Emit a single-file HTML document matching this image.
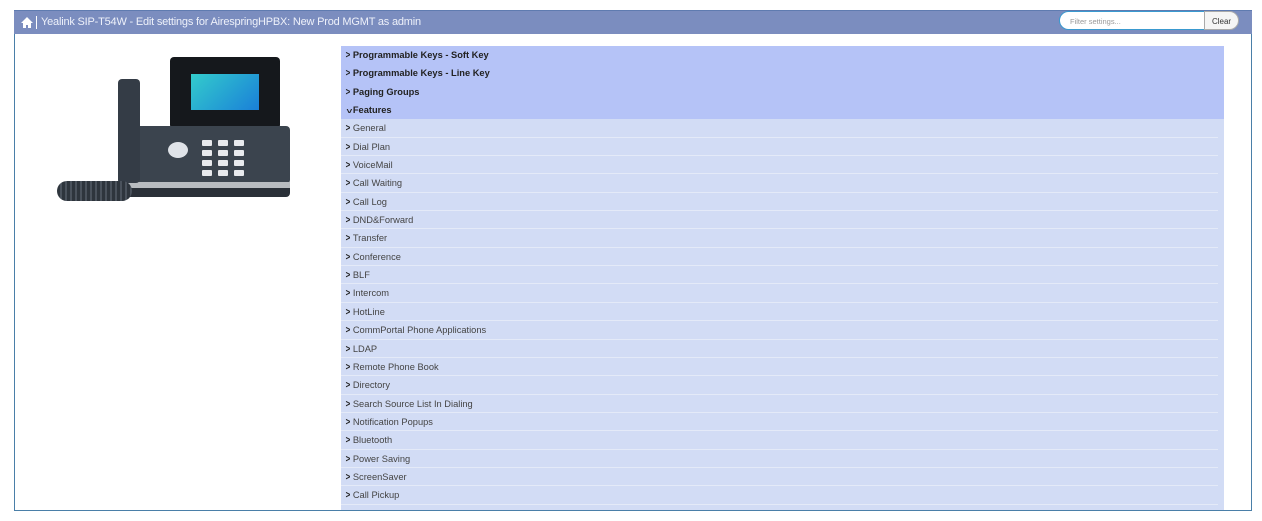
<!DOCTYPE html>
<html><head><meta charset="utf-8"><style>
*{margin:0;padding:0;box-sizing:border-box}
body{width:1262px;height:521px;background:#fff;font-family:"Liberation Sans",Arial,sans-serif;position:relative;overflow:hidden}
#frame{position:absolute;left:14px;top:10px;width:1238px;height:501px;border:1px solid #4a7fa8;border-top:none}
#hdr{position:absolute;left:14px;top:10px;width:1238px;height:24px;background:#7b8dbf;border-top:1px solid #5f7bb0;color:#eef1fa;font-size:11px}
#hdr .t{position:absolute;left:27px;top:5px;letter-spacing:-0.2px}
#filter{position:absolute;left:1059px;top:11px;width:146px;height:19px;border:1px solid #3a9ad0;border-radius:10px 0 0 10px;background:#fff;font-size:7.5px;color:#999;padding:5px 0 0 10px}
#clear{position:absolute;left:1204px;top:11px;width:35px;height:19px;border:1px solid #aaa;border-radius:0 10px 10px 0;background:#f5f5f5;font-size:8px;color:#333;text-align:center;padding-top:5px}
#panel{position:absolute;left:341px;top:46px;width:883px;height:470px;background:#d2dcf5}
.r{height:18.35px;font-size:9.3px;color:#444;padding-left:4px;line-height:18px;position:relative}
.top{background:#b5c3f7;font-weight:bold;color:#222}
.sub{border-bottom:1px solid #e4eaf8;margin-right:6px}
.c{display:inline-block;font-weight:900;font-size:10px;margin-right:2px;transform:scaleX(.8);color:#222}
.k{position:absolute;width:10px;height:6px;background:#e8eaee;border-radius:1px}
</style></head><body>
<div id="frame"></div>
<div id="hdr">
<svg style="position:absolute;left:6px;top:5px" width="14" height="13" viewBox="0 0 14 13"><path d="M7 1L1 7h2v5h3V9h2v3h3V7h2z" fill="#fff"/></svg>
<div style="position:absolute;left:22px;top:5px;width:1px;height:13px;background:#fff"></div>
<span class="t">Yealink SIP-T54W - Edit settings for AirespringHPBX: New Prod MGMT as admin</span>
</div>
<div id="filter">Filter settings...</div>
<div id="clear">Clear</div>
<!-- phone -->
<div style="position:absolute;left:170px;top:57px;width:110px;height:72px;background:#15181c;border-radius:4px"></div>
<div style="position:absolute;left:191px;top:74px;width:68px;height:36px;background:linear-gradient(135deg,#3cc,#1a7fd8);"></div>
<div style="position:absolute;left:118px;top:126px;width:172px;height:58px;background:#3b444e;border-radius:4px"></div>
<div style="position:absolute;left:118px;top:182px;width:172px;height:8px;background:#b8bcc0"></div>
<div style="position:absolute;left:118px;top:188px;width:172px;height:9px;background:#2a3038;border-radius:0 0 4px 4px"></div>
<div style="position:absolute;left:118px;top:79px;width:22px;height:104px;background:#343c46;border-radius:4px"></div>
<div style="position:absolute;left:57px;top:181px;width:75px;height:20px;border-radius:10px;background:repeating-linear-gradient(90deg,#2e353d 0 3px,#4a525c 3px 5px)"></div>
<div class="k" style="left:202px;top:140px"></div><div class="k" style="left:218px;top:140px"></div><div class="k" style="left:234px;top:140px"></div>
<div class="k" style="left:202px;top:150px"></div><div class="k" style="left:218px;top:150px"></div><div class="k" style="left:234px;top:150px"></div>
<div class="k" style="left:202px;top:160px"></div><div class="k" style="left:218px;top:160px"></div><div class="k" style="left:234px;top:160px"></div>
<div class="k" style="left:202px;top:170px"></div><div class="k" style="left:218px;top:170px"></div><div class="k" style="left:234px;top:170px"></div>
<div style="position:absolute;left:168px;top:142px;width:20px;height:16px;border-radius:50%;background:#dfe3e8"></div>
<div id="panel">
<div class="r top"><span class="c">&gt;</span>Programmable Keys - Soft Key</div>
<div class="r top"><span class="c">&gt;</span>Programmable Keys - Line Key</div>
<div class="r top"><span class="c">&gt;</span>Paging Groups</div>
<div class="r top"><span class="c" style="transform:rotate(90deg) scaleX(.8)">&gt;</span>Features</div>
<div class="r sub"><span class="c">&gt;</span>General</div>
<div class="r sub"><span class="c">&gt;</span>Dial Plan</div>
<div class="r sub"><span class="c">&gt;</span>VoiceMail</div>
<div class="r sub"><span class="c">&gt;</span>Call Waiting</div>
<div class="r sub"><span class="c">&gt;</span>Call Log</div>
<div class="r sub"><span class="c">&gt;</span>DND&amp;Forward</div>
<div class="r sub"><span class="c">&gt;</span>Transfer</div>
<div class="r sub"><span class="c">&gt;</span>Conference</div>
<div class="r sub"><span class="c">&gt;</span>BLF</div>
<div class="r sub"><span class="c">&gt;</span>Intercom</div>
<div class="r sub"><span class="c">&gt;</span>HotLine</div>
<div class="r sub"><span class="c">&gt;</span>CommPortal Phone Applications</div>
<div class="r sub"><span class="c">&gt;</span>LDAP</div>
<div class="r sub"><span class="c">&gt;</span>Remote Phone Book</div>
<div class="r sub"><span class="c">&gt;</span>Directory</div>
<div class="r sub"><span class="c">&gt;</span>Search Source List In Dialing</div>
<div class="r sub"><span class="c">&gt;</span>Notification Popups</div>
<div class="r sub"><span class="c">&gt;</span>Bluetooth</div>
<div class="r sub"><span class="c">&gt;</span>Power Saving</div>
<div class="r sub"><span class="c">&gt;</span>ScreenSaver</div>
<div class="r sub"><span class="c">&gt;</span>Call Pickup</div>
</div>
<div style="position:absolute;left:14px;top:510px;width:1238px;height:1px;background:#4a7fa8"></div>
<div style="position:absolute;left:0;top:511px;width:1262px;height:10px;background:#fff"></div>
</body></html>
